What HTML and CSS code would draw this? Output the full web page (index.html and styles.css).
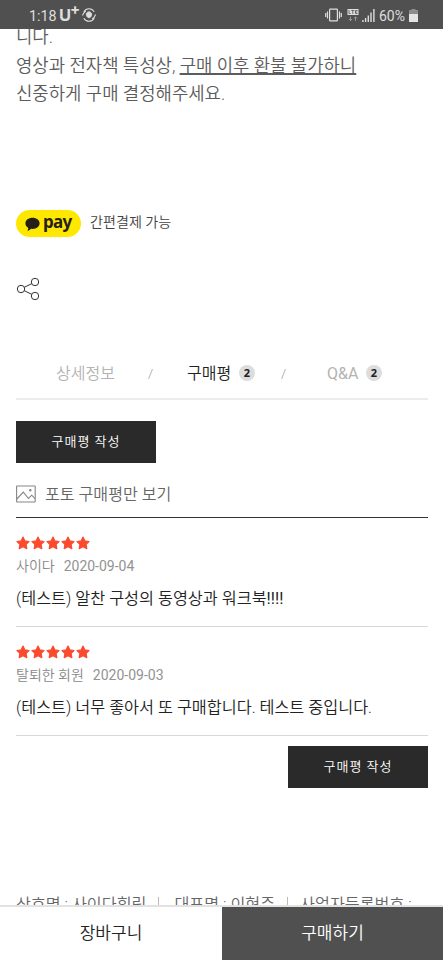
FILE: index.html
```html
<!DOCTYPE html>
<html lang="ko">
<head>
<meta charset="utf-8">
<title>구매평</title>
<meta name="viewport" content="width=device-width, initial-scale=1">
<link rel="stylesheet" href="styles.css">
</head>
<body>
<svg width="0" height="0" class="defs" aria-hidden="true">
  <symbol id="star" viewBox="0 0 14 14"><path d="M7 1.100 8.900 4.900 13 5.500 10.100 8.400 10.800 12.600 7 10.700 3.200 12.600 3.900 8.400 1 5.500 5.100 4.900Z" fill="#fb4a2e" stroke="#fb4a2e" stroke-width="1.2" stroke-linejoin="round"/></symbol>
</svg>
<div class="phone">
  <header class="status">
    <div class="status-left">
      <span class="clock">1:18</span>
      <span class="carrier">U<sup>+</sup></span>
      <svg class="eye" width="14" height="14" viewBox="0 0 14 14" fill="none" stroke="#dedede" stroke-width="1.100">
        <path d="M1.800 3.800C4.200-.3 9.800-.3 12.200 3.800M12.200 10.200C9.800 14.300 4.200 14.300 1.800 10.200M.4 7.500C1 5.600 2.200 4 3.800 3.200M13.600 6.500C13 8.400 11.800 10 10.200 10.800"/>
        <path d="M4.200 5.500 5.500 4.800 6.200 3.500 7 4.500 7.800 3.500 8.500 4.800 9.800 5.500 9.200 8.500 7 10 4.800 8.500Z" fill="#dedede" stroke-width=".8"/>
      </svg>
    </div>
    <div class="status-right">
      <svg class="vibrate" width="17" height="14" viewBox="0 0 17 14" fill="none" stroke="#dedede" stroke-width="1.200">
        <rect x="4.600" y="1.100" width="7.800" height="11.800" rx=".6"/>
        <path d="M2.500 3.500v7M.7 5v4M14.500 3.500v7M16.300 5v4"/>
      </svg>
      <svg class="lte" width="12" height="13" viewBox="0 0 12 13">
        <rect x=".5" y="0" width="11" height="6" fill="#dedede"/>
        <path d="M2 1v3.500h1.500M4.300 1.500h3M5.800 1.500v3.500M10.500 1.500H8.500v3h2M8.500 3h1.800" fill="none" stroke="#505050" stroke-width=".8"/>
        <path d="M3.500 7.500v4M2 10l1.500 1.700L5 10M8.500 12V8M7 9.500l1.500-1.700L10 9.500" fill="none" stroke="#aaa" stroke-width=".8"/>
      </svg>
      <svg class="signal" width="13" height="13" viewBox="0 0 13 13" stroke="#dedede" stroke-width="1.400"><path d="M.9 11v2M3.600 9v4M6.300 6.500v6.500M9 3.500v9.500M11.900 0v13"/></svg>
      <span class="percent">60%</span>
      <svg class="battery" width="9" height="13" viewBox="0 0 9 13"><path d="M2.500 0h4v1H9v12H0V1h2.500z" fill="#8d8d8d"/><path d="M0 5h9v8H0z" fill="#e4e4e4"/></svg>
    </div>
  </header>
  <main class="page">
    <p class="notice">니다.<br>영상과 전자책 특성상, <u>구매 이후 환불 불가하니</u><br>신중하게 구매 결정해주세요.</p>
    <div class="pay">
      <span class="pay-badge">
        <svg width="15" height="15" viewBox="0 0 15 15"><path d="M7.500.7C3.400.7.400 3.100.400 6.300c0 2 1.100 3.600 2.900 4.600L2.600 14.300l3.600-2.500c4.700.6 8.400-2 8.400-5.500C14.600 3.100 11.600.7 7.500.7Z" fill="#252018"/></svg>
        <b>pay</b>
      </span>
      <span class="pay-text">간편결제 가능</span>
    </div>
    <svg class="share" width="24" height="24" viewBox="0 0 24 24" fill="none" stroke="#333" stroke-width="1"><circle cx="5" cy="12" r="3.700"/><circle cx="19" cy="5" r="3.700"/><circle cx="19" cy="19" r="3.700"/><path d="m8.300 10.300 7.400-3.600M8.300 13.700l7.400 3.600"/></svg>
    <nav class="tabs">
      <span class="tab t1">상세정보</span>
      <span class="slash">/</span>
      <span class="tab t2 active">구매평</span><span class="count">2</span>
      <span class="slash s2">/</span>
      <span class="tab t3">Q&amp;A</span><span class="count">2</span>
    </nav>
    <button class="write">구매평 작성</button>
    <div class="photo">
      <svg width="20" height="18" viewBox="0 0 20 18" fill="none" stroke="#858585" stroke-width="1.100"><rect x=".6" y="1" width="18.600" height="16" rx=".5"/><path d="m.8 14 6.500-6.800 5.200 6.300 3.200-3.300 3.300 3.500"/><circle cx="14.300" cy="5.300" r=".7" fill="#858585"/></svg>
      <span class="photo-text">포토 구매평만 보기</span>
    </div>
    <section class="reviews">
      <article class="review">
        <div class="stars"><svg><use href="#star"/></svg><svg><use href="#star"/></svg><svg><use href="#star"/></svg><svg><use href="#star"/></svg><svg><use href="#star"/></svg></div>
        <div class="meta"><span>사이다</span><time>2020-09-04</time></div>
        <p>(테스트) 알찬 구성의 동영상과 워크북<span class="marks">!!!!</span></p>
      </article>
      <article class="review">
        <div class="stars"><svg><use href="#star"/></svg><svg><use href="#star"/></svg><svg><use href="#star"/></svg><svg><use href="#star"/></svg><svg><use href="#star"/></svg></div>
        <div class="meta"><span>탈퇴한 회원</span><time>2020-09-03</time></div>
        <p>(테스트) 너무 좋아서 또 구매합니다. 테스트 중입니다.</p>
      </article>
    </section>
    <button class="write end">구매평 작성</button>
    <footer class="company"><span>상호명 : 사이다힐링</span><i></i><span>대표명 : 이현주</span><i class="narrow"></i><span>사업자등록번호 :</span></footer>
  </main>
  <div class="actions">
    <button class="cart">장바구니</button>
    <button class="buy">구매하기</button>
  </div>
</div>
</body>
</html>
```
FILE: styles.css
```css
* { box-sizing: border-box; }
body { margin: 0; background: #fff; font-family: Roboto, "Noto Sans CJK KR", sans-serif; font-weight: 350; color: #222; }
p { margin: 0; }
button { border: 0; padding: 0; font: inherit; }
svg { display: block; flex: none; }
.defs { display: none; }
.phone { width: 443px; height: 960px; display: flex; flex-direction: column; overflow: hidden; }

.status { height: 29px; flex: none; background: #505050; color: #dedede; display: flex; justify-content: space-between; padding: 1px 25px 0 29px; font-size: 14px; font-weight: 400; }
.status-left, .status-right { display: flex; align-items: center; white-space: nowrap; }
.clock { font-size: 14.3px; width: 30px; margin-top: 1px; }
.carrier { font: 700 16.5px/20px Inter, sans-serif; width: 23px; display: flex; }
.carrier sup { font-size: 15px; line-height: 7px; margin-left: -1px; }
.lte { margin-left: 5px; }
.signal { margin-left: 3px; }
.percent { margin: 1px 0 0 4px; width: 30px; }

.page { flex: 1; min-height: 0; overflow: hidden; display: flex; flex-direction: column; padding: 0 15px 0 16px; }
.page > * { flex: none; }
.notice { margin-top: -6px; font-size: 17.8px; line-height: 28.5px; color: #5c5c5c; white-space: nowrap; height: 86px; }
.notice u { text-underline-offset: 1px; text-decoration-thickness: 1.5px; text-decoration-skip-ink: none; }

.pay { margin-top: 101px; height: 27px; display: flex; align-items: center; }
.pay-badge { width: 65px; height: 27px; border-radius: 14px; background: #ffe800; display: flex; align-items: center; padding-left: 9px; }
.pay-badge svg { margin-top: 1px; }
.pay-badge b { font: 700 17px/20px "Noto Sans", sans-serif; letter-spacing: -.7px; color: #252018; margin: -4px 0 0 3px; }
.pay-text { margin: -5px 0 0 9px; font-size: 14.1px; color: #444; }
.share { margin-top: 40px; }

.tabs { margin-top: 48px; height: 51px; padding: 0 0 2px 40px; border-bottom: 2px solid #ececec; display: flex; align-items: center; font-size: 16px; color: #b3b3b3; white-space: nowrap; }
.t1 { width: 92px; margin-top: -1px; }
.t2 { width: 52px; margin-top: -2px; }
.t3 { width: 39px; margin-top: 2px; font-weight: 400; }
.active { color: #222; }
.slash { width: 39px; font-size: 13px; color: #999; margin-top: 2px; }
.s2 { margin-left: 26px; width: 46px; }
.count { width: 16px; height: 16px; margin-top: 1px; border-radius: 50%; background: #ddd; color: #222; font: 700 11px/16px "Noto Sans", sans-serif; text-align: center; }

.write { margin-top: 21px; width: 140px; height: 42px; padding-bottom: 3px; background: #2a2a2a; color: #fff; font-size: 13px; letter-spacing: 1px; }
.end { align-self: flex-end; margin-top: 10px; }
.photo { height: 55px; display: flex; align-items: center; padding-top: 8px; border-bottom: 1px solid #333; color: #666; font-size: 16.1px; }
.photo-text { margin: -2px 0 0 9px; }

.review { height: 109px; padding-top: 18px; border-bottom: 1px solid #d8d8d8; }
.stars { display: flex; gap: 1px; }
.stars svg { width: 14px; height: 14px; }
.meta { display: flex; gap: 9px; margin-top: 6px; height: 20px; line-height: 20px; font-size: 14px; color: #888; }
.meta time { font-weight: 400; color: #939393; }
.review p { margin-top: 10px; height: 26px; line-height: 26px; font-size: 16.25px; color: #222; white-space: nowrap; }
.marks { font-weight: 400; }
.company { margin-top: 103px; display: flex; align-items: center; height: 24px; font-size: 16.2px; white-space: nowrap; color: #666; }
.company i { width: 1px; height: 12px; background: #bbb; margin: 0 15px 0 12px; }
.company .narrow { margin: 0 12px 0 12px; }

.actions { height: 55px; flex: none; display: flex; border-top: 2px solid #e2e2e2; font-size: 17px; }
.actions button { padding-bottom: 4px; }
.cart { width: 222px; background: #fff; color: #222; }
.buy { flex: 1; background: #505050; color: #fff; }
```
